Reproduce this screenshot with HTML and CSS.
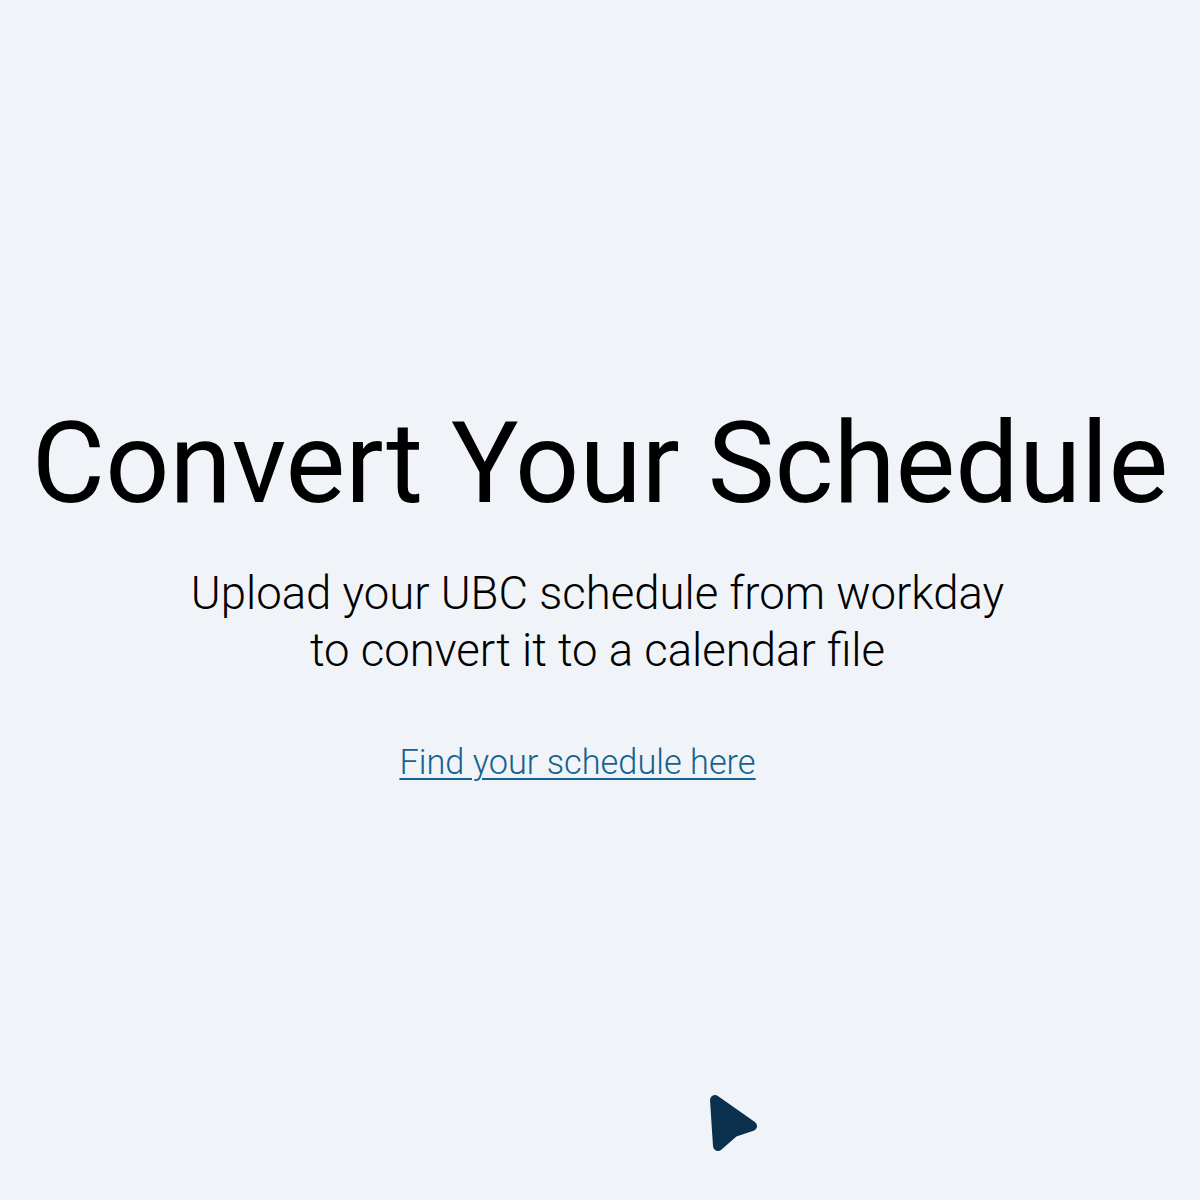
FILE: index.html
```html
<!DOCTYPE html>
<html lang="en">
<head>
<meta charset="utf-8">
<title>Convert Your Schedule</title>
<link rel="stylesheet" href="styles.css">
</head>
<body>
<main class="page">
  <h1 class="title">Convert Your Schedule</h1>
  <p class="subtitle">Upload your UBC schedule from workday<br>to convert it to a calendar file</p>
  <a class="link" href="#">Find your schedule here</a>
</main>
<svg class="pointer" width="60" height="70" viewBox="0 0 60 70" aria-hidden="true">
  <path d="M9 10 L46 36 L28 42 L12 56 Z" fill="#0b304d" stroke="#0b304d" stroke-width="10" stroke-linejoin="round"/>
</svg>
</body>
</html>
```
FILE: styles.css
```css
html, body {
  margin: 0;
  padding: 0;
}
body {
  background: #f0f4f9;
  font-family: Roboto, "Noto Sans", sans-serif;
  color: #000;
  min-height: 1200px;
  position: relative;
}
.page {
  display: flex;
  flex-direction: column;
  align-items: center;
  padding-top: 396px;
}
.title {
  margin: 0;
  font-size: 112.7px;
  font-weight: 400;
  line-height: 1.2;
  white-space: nowrap;
}
.subtitle {
  margin: 34px 0 0 -5px;
  font-size: 45.5px;
  font-weight: 300;
  line-height: 57px;
  text-align: center;
}
.link {
  margin-top: 63px;
  margin-left: -45px;
  font-size: 34.3px;
  font-weight: 300;
  color: #14628f;
  text-decoration: underline;
  text-decoration-thickness: 2px;
  text-underline-offset: 4px;
}
.pointer {
  position: absolute;
  left: 706px;
  top: 1090px;
}
```
